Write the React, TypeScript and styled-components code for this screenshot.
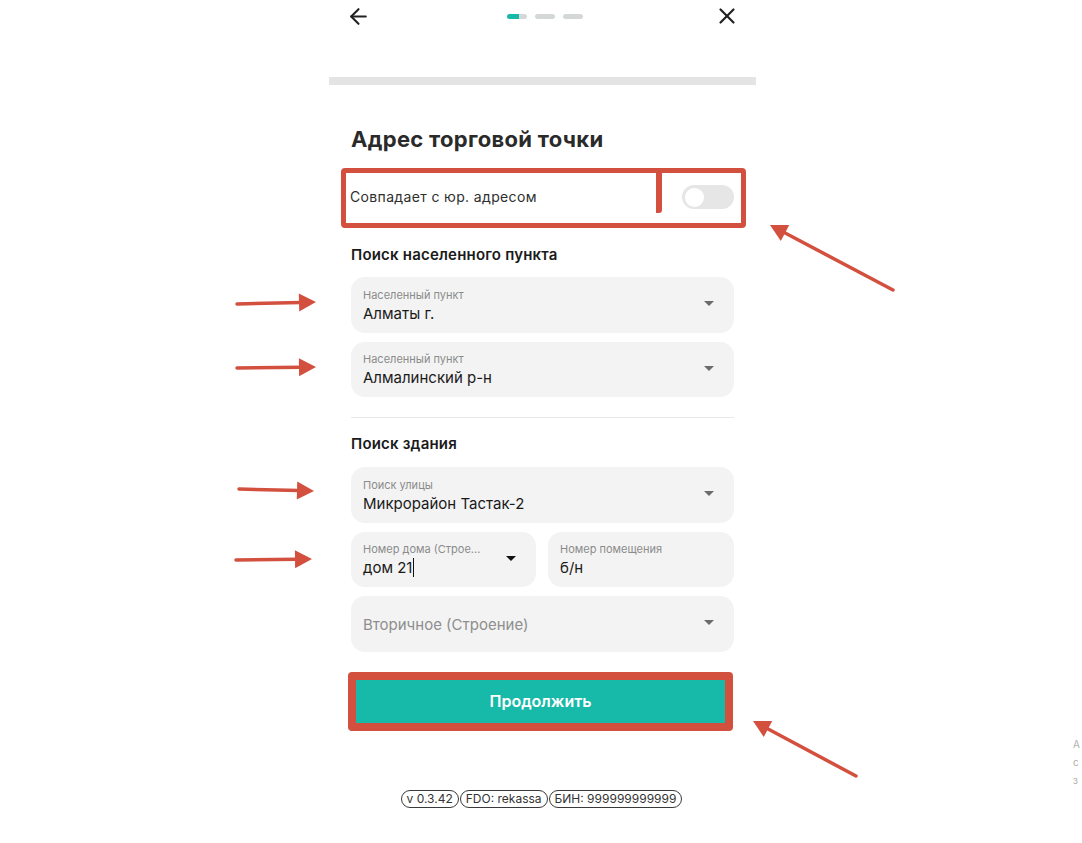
import React from 'react';
import styled, { createGlobalStyle } from 'styled-components';
import { ArrowLeft, X } from 'lucide-react';

const RED = '#d3503f';
const TEAL = '#17b9a9';

const GlobalStyle = createGlobalStyle`
  html, body {
    margin: 0;
    padding: 0;
    background: #fff;
    overflow: hidden;
  }
  body {
    font-family: Inter, "Noto Sans", "Liberation Sans", sans-serif;
    color: #1c1c1c;
  }
`;

const Canvas = styled.div`
  position: relative;
  width: 1082px;
  height: 843px;
  display: flex;
  justify-content: center;
`;

const Column = styled.div`
  width: 427px;
  margin-left: 3px;
  display: flex;
  flex-direction: column;
`;

const Header = styled.header`
  height: 32px;
  padding: 0 16px 0 17px;
  display: flex;
  align-items: center;
  justify-content: space-between;
  color: #222;
`;

const Steps = styled.div`
  display: flex;
  gap: 8px;
  margin-left: 5px;
`;

const Step = styled.span<{ $fill: number }>`
  width: 20px;
  height: 5px;
  border-radius: 3px;
  background: linear-gradient(90deg, ${TEAL} ${({ $fill }) => $fill}%, #d5d8d8 ${({ $fill }) => $fill}%);
`;

const Bar = styled.div`
  margin-top: 45px;
  height: 8px;
  background: #e4e4e4;
`;

const Content = styled.div`
  padding: 0 22px;
  display: flex;
  flex-direction: column;
`;

const Title = styled.h1`
  margin: 40px 0 0;
  font-size: 22px;
  line-height: 28px;
  font-weight: 700;
  letter-spacing: 0.3px;
  color: #2a2a2a;
`;

const ToggleRow = styled.div`
  margin: 15px -12px 0 -10px;
  height: 60px;
  box-sizing: border-box;
  border: 5px solid ${RED};
  border-radius: 4px;
  display: flex;
`;

const ToggleLabel = styled.div`
  flex: 1;
  display: flex;
  align-items: center;
  padding: 6px 0 0 4px;
  margin-bottom: 10px;
  font-size: 14px;
  letter-spacing: 0.35px;
  color: #2e2e2e;
  border-right: 6px solid ${RED};
  border-bottom-right-radius: 3px;
`;

const ToggleCell = styled.div`
  width: 79px;
  display: flex;
  align-items: center;
  padding: 0 0 2px 20px;
  box-sizing: border-box;
`;

const Switch = styled.span`
  width: 52px;
  height: 24px;
  border-radius: 12px;
  background: #e6e6e6;
  display: flex;
  align-items: center;
  padding: 0 3px;
  box-sizing: border-box;
  &::before {
    content: '';
    width: 19px;
    height: 19px;
    border-radius: 50%;
    background: #fff;
  }
`;

const SectionTitle = styled.h2<{ $top: number }>`
  margin: ${({ $top }) => $top}px 0 0;
  font-size: 15px;
  line-height: 20px;
  font-weight: 600;
  letter-spacing: 0.2px;
  color: #1a1a1a;
`;

const Fields = styled.div<{ $top: number }>`
  margin-top: ${({ $top }) => $top}px;
  display: flex;
  flex-direction: column;
  gap: 9px;
`;

const FieldRow = styled.div`
  display: grid;
  grid-template-columns: 185px 1fr;
  gap: 12px;
`;

const Field = styled.div`
  height: 55.5px;
  box-sizing: border-box;
  border-radius: 14px;
  background: #f3f3f3;
  padding: 0 20px 0 12px;
  display: flex;
  align-items: center;
  gap: 8px;
`;

const FieldText = styled.div`
  flex: 1;
  min-width: 0;
  display: flex;
  flex-direction: column;
  gap: 2px;
  padding-top: 2px;
`;

const FieldLabel = styled.span`
  font-size: 11px;
  line-height: 14px;
  color: #8b8b8b;
  white-space: nowrap;
  overflow: hidden;
`;

const FieldValue = styled.span<{ $muted?: boolean }>`
  font-size: 15px;
  line-height: 20px;
  color: ${({ $muted }) => ($muted ? '#8e8e8e' : '#1a1a1a')};
  white-space: nowrap;
`;

const Caret = styled.span`
  display: inline-block;
  width: 1px;
  height: 19px;
  background: #111;
  vertical-align: -4px;
  margin-left: 1px;
`;

const Chevron = styled.span<{ $dark?: boolean }>`
  width: 0;
  height: 0;
  border-left: 5px solid transparent;
  border-right: 5px solid transparent;
  border-top: 5px solid ${({ $dark }) => ($dark ? '#111' : '#6b6b6b')};
  margin-bottom: 2px;
`;

const Divider = styled.hr`
  margin: 20px 0 0;
  border: 0;
  height: 1px;
  background: #e8e8e8;
`;

const ButtonFrame = styled.div`
  margin: 20px 1px 0 -3px;
  border: 8px solid ${RED};
  border-radius: 4px;
`;

const Button = styled.button`
  width: 100%;
  height: 43px;
  border: 0;
  background: ${TEAL};
  color: #fff;
  font-family: inherit;
  font-size: 16px;
  font-weight: 600;
  display: block;
`;

const Footer = styled.div`
  margin-top: 59px;
  display: flex;
  justify-content: center;
  gap: 1px;
  margin-left: -2px;
`;

const Badge = styled.span`
  height: 18px;
  box-sizing: border-box;
  padding: 0 5px;
  border: 1px solid #3a3a3a;
  border-radius: 9px;
  font-size: 12px;
  line-height: 16px;
  color: #333;
  white-space: nowrap;
`;

const Annotation = styled.svg`
  position: absolute;
  left: 0;
  top: 0;
  pointer-events: none;
`;

const EdgeText = styled.div`
  position: absolute;
  left: 1073px;
  top: 738px;
  display: flex;
  flex-direction: column;
  gap: 6px;
  font-size: 10px;
  line-height: 12px;
  color: #b0b0b0;
`;

function SelectField({ label, value, dark }: { label?: string; value: React.ReactNode; dark?: boolean }) {
  return (
    <Field>
      <FieldText>
        {label && <FieldLabel>{label}</FieldLabel>}
        {label ? <FieldValue>{value}</FieldValue> : <FieldValue $muted>{value}</FieldValue>}
      </FieldText>
      <Chevron $dark={dark} />
    </Field>
  );
}

function Arrow({ x1, y1, x2, y2 }: { x1: number; y1: number; x2: number; y2: number }) {
  const a = Math.atan2(y2 - y1, x2 - x1);
  const len = 17;
  const w = 9;
  const bx = x2 - Math.cos(a) * len;
  const by = y2 - Math.sin(a) * len;
  const px = -Math.sin(a) * w;
  const py = Math.cos(a) * w;
  return (
    <g>
      <line x1={x1} y1={y1} x2={bx + Math.cos(a) * 2} y2={by + Math.sin(a) * 2} stroke={RED} strokeWidth={3.5} strokeLinecap="round" />
      <polygon points={`${x2},${y2} ${bx + px},${by + py} ${bx - px},${by - py}`} fill={RED} />
    </g>
  );
}

export default function App() {
  return (
    <>
      <GlobalStyle />
      <Canvas>
        <Column>
          <Header>
            <ArrowLeft size={25} strokeWidth={2} />
            <Steps>
              <Step $fill={60} />
              <Step $fill={0} />
              <Step $fill={0} />
            </Steps>
            <X size={26} strokeWidth={2} />
          </Header>
          <Bar />
          <Content>
            <Title>Адрес торговой точки</Title>
            <ToggleRow>
              <ToggleLabel>Совпадает с юр. адресом</ToggleLabel>
              <ToggleCell>
                <Switch />
              </ToggleCell>
            </ToggleRow>

            <SectionTitle $top={17}>Поиск населенного пункта</SectionTitle>
            <Fields $top={12}>
              <SelectField label="Населенный пункт" value="Алматы г." />
              <SelectField label="Населенный пункт" value="Алмалинский р-н" />
            </Fields>

            <Divider />

            <SectionTitle $top={16}>Поиск здания</SectionTitle>
            <Fields $top={13}>
              <SelectField label="Поиск улицы" value="Микрорайон Тастак-2" />
              <FieldRow>
                <Field>
                  <FieldText>
                    <FieldLabel>Номер дома (Строе...</FieldLabel>
                    <FieldValue>
                      дом 21
                      <Caret />
                    </FieldValue>
                  </FieldText>
                  <Chevron $dark />
                </Field>
                <Field>
                  <FieldText>
                    <FieldLabel>Номер помещения</FieldLabel>
                    <FieldValue>б/н</FieldValue>
                  </FieldText>
                </Field>
              </FieldRow>
              <SelectField value="Вторичное (Строение)" />
            </Fields>

            <ButtonFrame>
              <Button>Продолжить</Button>
            </ButtonFrame>

            <Footer>
              <Badge>v 0.3.42</Badge>
              <Badge>FDO: rekassa</Badge>
              <Badge>БИН: 999999999999</Badge>
            </Footer>
          </Content>
        </Column>

        <Annotation width={1082} height={843} viewBox="0 0 1082 843">
          <Arrow x1={237} y1={304} x2={316} y2={302} />
          <Arrow x1={237} y1={368} x2={316} y2={367} />
          <Arrow x1={239} y1={489} x2={314} y2={491} />
          <Arrow x1={236} y1={560} x2={312} y2={559} />
          <Arrow x1={893} y1={290} x2={770} y2={225} />
          <Arrow x1={856} y1={776} x2={753} y2={721} />
        </Annotation>

        <EdgeText>
          <span>А</span>
          <span>с</span>
          <span>з</span>
        </EdgeText>
      </Canvas>
    </>
  );
}
